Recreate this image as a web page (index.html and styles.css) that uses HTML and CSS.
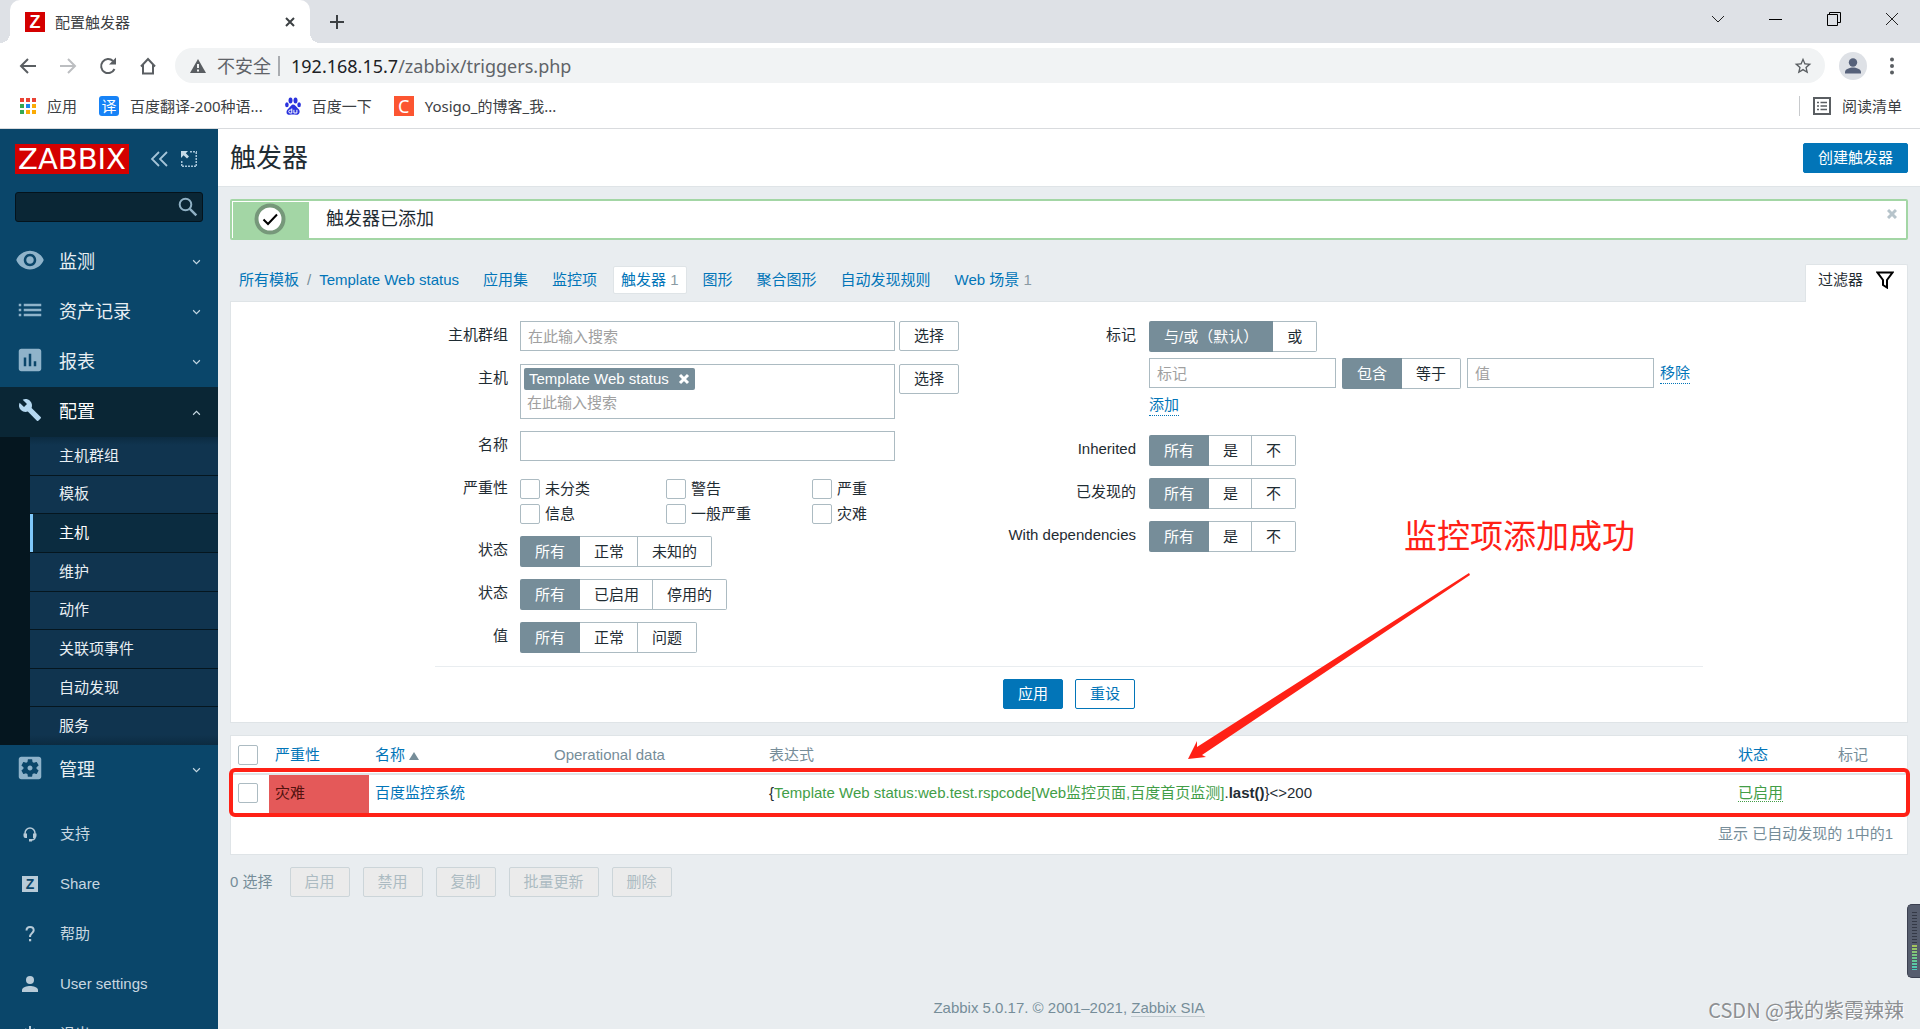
FILE: index.html
```
<!DOCTYPE html>
<html lang="zh-CN">
<head>
<meta charset="utf-8">
<title>配置触发器</title>
<link rel="stylesheet" href="styles.css">
</head>
<body>
<div class="browser">
  <div class="tabstrip">
    <div class="tab">
      <span class="favicon">Z</span>
      <span class="tab-title">配置触发器</span>
      <button class="icon-btn" aria-label="关闭标签页"><svg width="12" height="12" viewBox="0 0 12 12"><path d="M2 2l8 8M10 2l-8 8" stroke="#3c4043" stroke-width="2" fill="none"/></svg></button>
    </div>
    <button class="icon-btn new-tab" aria-label="新标签页"><svg width="16" height="16" viewBox="0 0 16 16"><path d="M8 1v14M1 8h14" stroke="#3c4043" stroke-width="2" fill="none"/></svg></button>
    <div class="window-controls">
      <button class="icon-btn" aria-label="搜索标签页"><svg width="14" height="14" viewBox="0 0 14 14"><path d="M1 4l6 6 6-6" stroke="#222" fill="none"/></svg></button>
      <button class="icon-btn" aria-label="最小化"><svg width="14" height="14" viewBox="0 0 14 14"><path d="M0 7.500h13" stroke="#000" fill="none"/></svg></button>
      <button class="icon-btn" aria-label="还原"><svg width="14" height="14" viewBox="0 0 14 14"><path d="M.5 2.500h10v11H.5zM2.500 2.500v-2h11v10h-3" stroke="#000" fill="none"/></svg></button>
      <button class="icon-btn" aria-label="关闭"><svg width="14" height="14" viewBox="0 0 14 14"><path d="M1 1l12 12M13 1L1 13" stroke="#222" fill="none"/></svg></button>
    </div>
  </div>
  <div class="toolbar">
    <button class="icon-btn" aria-label="后退"><svg width="20" height="20" viewBox="0 0 20 20"><path d="M18 10H3M10 3l-7 7 7 7" stroke="#5a5e62" stroke-width="2" fill="none"/></svg></button>
    <button class="icon-btn" aria-label="前进"><svg width="20" height="20" viewBox="0 0 20 20"><path d="M2 10h15M10 3l7 7-7 7" stroke="#bcbec1" stroke-width="2" fill="none"/></svg></button>
    <button class="icon-btn" aria-label="重新加载"><svg width="20" height="20" viewBox="0 0 20 20"><path d="M16.500 13a7 7 0 1 1-1.500-8" stroke="#5a5e62" stroke-width="2" fill="none"/><path d="M18 1.500v7h-7z" fill="#5a5e62"/></svg></button>
    <button class="icon-btn" aria-label="主页"><svg width="20" height="20" viewBox="0 0 20 20"><path d="M5 9v8.500h10V9M3 10.500l7-7.500 7 7.500" stroke="#5a5e62" stroke-width="2" fill="none"/></svg></button>
    <div class="omnibox">
      <svg width="16" height="14" viewBox="0 0 16 14"><path d="M8 0l8 14H0z" fill="#5a5e62"/><path d="M8 5v4M8 10.500v2" stroke="#f1f3f4" stroke-width="2"/></svg>
      <span class="insecure">不安全</span>
      <span class="url"><span class="host">192.168.15.7</span>/zabbix/triggers.php</span>
      <button class="icon-btn bookmark-star" aria-label="为此标签页添加书签"><svg width="20" height="20" viewBox="0 0 24 24"><path fill="#5a5e62" d="M22 9.240l-7.190-.62L12 2 9.190 8.630 2 9.240l5.460 4.730L5.820 21 12 17.270 18.180 21l-1.630-7.030L22 9.240zM12 15.400l-3.760 2.270 1-4.280-3.320-2.880 4.380-.38L12 6.100l1.710 4.040 4.380.38-3.320 2.880 1 4.280L12 15.400z"/></svg></button>
    </div>
    <button class="avatar" aria-label="用户"><svg width="28" height="28" viewBox="0 0 28 28"><circle cx="14" cy="10.500" r="4.200" fill="#56617a"/><path d="M6 21.500v-1.500c0-3 5-4.500 8-4.500s8 1.500 8 4.500v1.500z" fill="#56617a"/></svg></button>
    <button class="icon-btn" aria-label="菜单"><svg width="20" height="20" viewBox="0 0 20 20" fill="#5a5e62"><circle cx="10" cy="3.500" r="2"/><circle cx="10" cy="10" r="2"/><circle cx="10" cy="16.500" r="2"/></svg></button>
  </div>
  <nav class="bookmarks">
    <a href="#" class="bookmark"><svg width="16" height="16" viewBox="0 0 16 16"><path fill="#ea4335" d="M0 0h4v4H0zM6 0h4v4H6zM12 0h4v4h-4z"/><path fill="#34a853" d="M0 6h4v4H0zM0 12h4v4H0z"/><path fill="#1a86f0" d="M6 6h4v4H6z"/><path fill="#fbab05" d="M12 6h4v4h-4zM6 12h4v4H6zM12 12h4v4h-4z"/></svg>应用</a>
    <a href="#" class="bookmark"><span class="site-icon translate">译</span>百度翻译-200种语...</a>
    <a href="#" class="bookmark"><svg width="16" height="20" viewBox="2 0 16 20" fill="#2a32dd"><ellipse cx="7.500" cy="4.500" rx="2" ry="3"/><ellipse cx="12.500" cy="4.500" rx="2" ry="3"/><ellipse cx="3.900" cy="8.800" rx="1.800" ry="2.500"/><ellipse cx="16.100" cy="8.800" rx="1.800" ry="2.500"/><path d="M10 8.500c2 0 3 2 4.500 3.500s2.500 2.500 2 4.500-2 2.500-3.500 2.300-4.500-.3-6 0-3.500-.5-3.500-2.500 1-2.800 2.500-4.300S8.500 8.500 10 8.500z"/><path d="M8.800 12.500v4.500H7.200a1.300 1.300 0 0 1 0-3h1.600M10.900 13.800V17h3v-3.200" stroke="#fff" fill="none"/></svg>百度一下</a>
    <a href="#" class="bookmark"><span class="site-icon csdn">C</span>Yosigo_的博客_我...</a>
    <a href="#" class="bookmark reading"><svg width="18" height="18" viewBox="0 0 18 18"><path d="M1 1h16v16H1z" fill="none" stroke="#5a5e62" stroke-width="2"/><path d="M4 5.500h2M4 9h2M4 12.500h2M7.500 5.500H14M7.500 9H14M7.500 12.500H14" stroke="#5a5e62" stroke-width="1.500"/></svg>阅读清单</a>
  </nav>
</div>

<div class="app">
  <aside class="sidebar">
    <div class="brand">
      <a href="#" class="logo">ZABBIX</a>
      <button class="icon-btn collapse" aria-label="折叠侧边栏"><svg width="18" height="16" viewBox="0 0 18 16"><path d="M9 1L2 8l7 7M17 1l-7 7 7 7" stroke="#a5c4d8" stroke-width="1.800" fill="none"/></svg></button>
      <button class="icon-btn" aria-label="隐藏侧边栏"><svg width="16" height="16" viewBox="0 0 16 16"><path d="M9 .75h7M15.250 1v14M15 15.250H1M.75 15V9" stroke="#a5c4d8" stroke-width="1.500" stroke-dasharray="2 1" fill="none"/><path d="M0 0h7L4.800 2.300 8 5.500 6 7.500 2.600 4.300 0 7z" fill="#c5dbe8"/></svg></button>
    </div>
    <form class="search">
      <input type="text" aria-label="搜索">
      <button class="icon-btn" type="button" aria-label="搜索"><svg width="20" height="20" viewBox="0 0 20 20"><circle cx="7.500" cy="7.500" r="5.800" fill="none" stroke="#8fb0c4" stroke-width="2"/><path d="M11.800 11.800l6.500 6.500" stroke="#8fb0c4" stroke-width="2.500"/></svg></button>
    </form>
    <nav class="menu">
      <a href="#" class="menu-item"><svg class="menu-icon" viewBox="0 0 24 24"><path d="M12 4.500C7 4.500 2.730 7.610 1 12c1.730 4.390 6 7.500 11 7.500s9.270-3.110 11-7.500c-1.730-4.390-6-7.500-11-7.500zM12 17c-2.760 0-5-2.240-5-5s2.240-5 5-5 5 2.240 5 5-2.240 5-5 5zm0-8c-1.660 0-3 1.340-3 3s1.340 3 3 3 3-1.340 3-3-1.340-3-3-3z"/></svg><span>监测</span><svg class="chevron" viewBox="0 0 8 8"><path d="M1 2l3 3 3-3"/></svg></a>
      <a href="#" class="menu-item"><svg class="menu-icon" viewBox="0 0 24 24"><path d="M3 7h2v2H3zM3 11h2v2H3zM3 15h2v2H3zM7 7h14v2H7zM7 11h14v2H7zM7 15h14v2H7z"/></svg><span>资产记录</span><svg class="chevron" viewBox="0 0 8 8"><path d="M1 2l3 3 3-3"/></svg></a>
      <a href="#" class="menu-item"><svg class="menu-icon" viewBox="0 0 24 24"><path d="M19 3H5c-1.100 0-2 .9-2 2v14c0 1.100.9 2 2 2h14c1.100 0 2-.9 2-2V5c0-1.100-.9-2-2-2zM9 17H7v-7h2v7zm4 0h-2V7h2v10zm4 0h-2v-4h2v4z"/></svg><span>报表</span><svg class="chevron" viewBox="0 0 8 8"><path d="M1 2l3 3 3-3"/></svg></a>
      <a href="#" class="menu-item open"><svg class="menu-icon" viewBox="-3 -3 30 30"><path d="M22.700 19l-9.100-9.100c.9-2.300.4-5-1.500-6.900-2-2-5-2.400-7.400-1.300L9 6 6 9 1.600 4.700C.4 7.100.9 10.100 2.900 12.100c1.900 1.900 4.600 2.400 6.900 1.500l9.100 9.100c.4.4 1 .4 1.400 0l2.300-2.300c.5-.4.5-1.100.1-1.400z"/></svg><span>配置</span><svg class="chevron" viewBox="0 0 8 8"><path d="M1 6l3-3 3 3"/></svg></a>
      <div class="submenu">
        <a href="#">主机群组</a>
        <a href="#">模板</a>
        <a href="#" class="current">主机</a>
        <a href="#">维护</a>
        <a href="#">动作</a>
        <a href="#">关联项事件</a>
        <a href="#">自动发现</a>
        <a href="#">服务</a>
      </div>
      <a href="#" class="menu-item"><svg class="menu-icon" viewBox="0 0 24 24"><path d="M12 10c-1.100 0-2 .9-2 2s.9 2 2 2 2-.9 2-2-.9-2-2-2zm7-7H5c-1.110 0-2 .9-2 2v14c0 1.100.89 2 2 2h14c1.110 0 2-.9 2-2V5c0-1.100-.89-2-2-2zm-1.750 9c0 .23-.02.46-.05.68l1.480 1.160c.13.11.17.3.08.45l-1.400 2.420c-.09.15-.27.21-.43.15l-1.740-.7c-.36.28-.76.51-1.180.69l-.26 1.850c-.03.17-.18.3-.35.3h-2.800c-.17 0-.32-.13-.35-.29l-.26-1.850c-.43-.18-.82-.41-1.180-.69l-1.740.7c-.16.06-.34 0-.43-.15l-1.400-2.420c-.09-.15-.05-.34.08-.45l1.480-1.160c-.03-.23-.05-.46-.05-.69 0-.23.02-.46.05-.68l-1.480-1.160c-.13-.11-.17-.3-.08-.45l1.400-2.420c.09-.15.27-.21.43-.15l1.740.7c.36-.28.76-.51 1.180-.69l.26-1.850c.03-.17.18-.3.35-.3h2.800c.17 0 .32.13.35.29l.26 1.850c.43.18.82.41 1.180.69l1.740-.7c.16-.06.34 0 .43.15l1.400 2.420c.09.15.05.34-.08.45l-1.480 1.160c.03.23.05.46.05.69z"/></svg><span>管理</span><svg class="chevron" viewBox="0 0 8 8"><path d="M1 2l3 3 3-3"/></svg></a>
    </nav>
    <nav class="user-menu">
      <a href="#"><svg viewBox="0 0 16 16"><path d="M3 9V7.500a5 5.500 0 0 1 10 0V11c0 2-1 3-4 3" fill="none" stroke="#b8cbd8" stroke-width="1.500"/><path d="M1.500 7.500H5V12H3.500a2 2 0 0 1-2-2zM11 7.500h3.500V10a2 2 0 0 1-2 2H11zM7 13h3v2.500H7z"/></svg>支持</a>
      <a href="#"><span class="z-mark">Z</span>Share</a>
      <a href="#"><svg viewBox="0 0 16 16"><path d="M4.500 4.500C4.500 2 6 1 8 1s3.700 1.300 3.700 3.300C11.700 7 8 7 8 11" fill="none" stroke="#b8cbd8" stroke-width="2"/><path d="M7 13h2.200v2.300H7z"/></svg>帮助</a>
      <a href="#"><svg viewBox="0 0 16 16"><circle cx="8" cy="4" r="4"/><path d="M0 16v-2c0-2.700 5-4 8-4s8 1.300 8 4v2z"/></svg>User settings</a>
      <a href="#"><svg viewBox="0 0 16 16"><path d="M7 0h2v8H7z"/><path d="M4.500 3a6 6 0 1 0 7 0" fill="none" stroke="#b8cbd8" stroke-width="2"/></svg>退出</a>
    </nav>
  </aside>

  <main class="content">
    <header class="page-header">
      <h1>触发器</h1>
      <button class="btn primary">创建触发器</button>
    </header>

    <section class="message">
      <div class="message-icon"><svg width="32" height="32" viewBox="0 0 32 32"><circle cx="16" cy="16" r="13.500" fill="#fff" stroke="#76987a" stroke-width="4"/><path d="M9.500 16.500l4.500 4.500 9-9.500" stroke="#000" stroke-width="2" fill="none"/></svg></div>
      <p>触发器已添加</p>
      <button class="icon-btn" aria-label="关闭消息"><svg width="10" height="10" viewBox="0 0 10 10"><path d="M1 1l8 8M9 1l-8 8" stroke="#b7c4cb" stroke-width="3" fill="none"/></svg></button>
    </section>

    <div class="tabs">
      <nav class="crumbs">
        <span class="path"><a href="#">所有模板</a><span>/</span><a href="#">Template Web status</a></span>
        <a href="#">应用集</a>
        <a href="#">监控项</a>
        <span class="selected"><a href="#">触发器</a> <sup>1</sup></span>
        <a href="#">图形</a>
        <a href="#">聚合图形</a>
        <a href="#">自动发现规则</a>
        <span><a href="#">Web 场景</a> <sup>1</sup></span>
      </nav>
      <button class="filter-tab">过滤器<svg width="18" height="18" viewBox="0 0 18 18"><path d="M1.500 1.500h15L11 9v7.500L7 14V9z" stroke="#000" stroke-width="2" fill="none"/></svg></button>
    </div>

    <form class="panel filter">
      <div class="filter-body">
        <div class="fields">
          <label class="name" for="groups">主机群组</label>
          <div class="field pick"><input class="text" id="groups" type="text" placeholder="在此输入搜索"><button type="button" class="btn plain">选择</button></div>

          <label class="name" for="hosts">主机</label>
          <div class="field pick">
            <div class="multiselect">
              <span class="chip">Template Web status<button type="button" class="icon-btn" aria-label="移除"><svg width="12" height="12" viewBox="0 0 12 12"><path d="M2 2l8 8M10 2l-8 8" stroke="#fff" stroke-width="3" fill="none"/></svg></button></span>
              <input id="hosts" type="text" placeholder="在此输入搜索">
            </div>
            <button type="button" class="btn plain">选择</button>
          </div>

          <label class="name" for="name">名称</label>
          <div class="field pick"><input class="text" id="name" type="text"></div>

          <span class="name">严重性</span>
          <div class="checks">
            <label><input type="checkbox">未分类</label><label><input type="checkbox">警告</label><label><input type="checkbox">严重</label>
            <label><input type="checkbox">信息</label><label><input type="checkbox">一般严重</label><label><input type="checkbox">灾难</label>
          </div>

          <span class="name">状态</span>
          <div class="seg"><label><input type="radio" name="state" checked>所有</label><label><input type="radio" name="state">正常</label><label><input type="radio" name="state">未知的</label></div>

          <span class="name">状态</span>
          <div class="seg"><label><input type="radio" name="status" checked>所有</label><label><input type="radio" name="status">已启用</label><label><input type="radio" name="status">停用的</label></div>

          <span class="name">值</span>
          <div class="seg"><label><input type="radio" name="value" checked>所有</label><label><input type="radio" name="value">正常</label><label><input type="radio" name="value">问题</label></div>
        </div>

        <div class="fields right">
          <span class="name">标记</span>
          <div class="tags">
            <div class="seg"><label><input type="radio" name="evaltype" checked>与/或（默认）</label><label><input type="radio" name="evaltype">或</label></div>
            <div class="tag-row">
              <input class="text" type="text" placeholder="标记" aria-label="标记">
              <div class="seg"><label><input type="radio" name="op" checked>包含</label><label><input type="radio" name="op">等于</label></div>
              <input class="text" type="text" placeholder="值" aria-label="值">
              <button type="button" class="link">移除</button>
            </div>
            <div class="add-row"><button type="button" class="link">添加</button></div>
          </div>

          <span class="name">Inherited</span>
          <div class="seg"><label><input type="radio" name="inherited" checked>所有</label><label><input type="radio" name="inherited">是</label><label><input type="radio" name="inherited">不</label></div>

          <span class="name">已发现的</span>
          <div class="seg"><label><input type="radio" name="discovered" checked>所有</label><label><input type="radio" name="discovered">是</label><label><input type="radio" name="discovered">不</label></div>

          <span class="name">With dependencies</span>
          <div class="seg"><label><input type="radio" name="deps" checked>所有</label><label><input type="radio" name="deps">是</label><label><input type="radio" name="deps">不</label></div>
        </div>
      </div>
      <div class="filter-actions">
        <button type="button" class="btn primary">应用</button>
        <button type="button" class="btn outline">重设</button>
      </div>
    </form>

    <section class="panel list">
      <table>
        <colgroup><col class="c-check"><col class="c-sev"><col class="c-name"><col class="c-data"><col><col class="c-status"><col class="c-tags"></colgroup>
        <thead>
          <tr><th><input type="checkbox" aria-label="全选"></th><th><a href="#">严重性</a></th><th><a href="#">名称</a><span class="sort"></span></th><th>Operational data</th><th>表达式</th><th><a href="#">状态</a></th><th>标记</th></tr>
        </thead>
        <tbody>
          <tr><td><input type="checkbox" aria-label="百度监控系统"></td><td class="disaster">灾难</td><td><a href="#">百度监控系统</a></td><td></td><td>{<a href="#" class="green">Template Web status:web.test.rspcode[Web监控页面,百度首页监测]</a>.<b>last()</b>}&lt;&gt;200</td><td><a href="#" class="green dotted">已启用</a></td><td></td></tr>
        </tbody>
      </table>
      <p class="stats">显示 已自动发现的 1中的1</p>
    </section>

    <div class="bulk">
      <span>0 选择</span>
      <button class="btn" disabled>启用</button>
      <button class="btn" disabled>禁用</button>
      <button class="btn" disabled>复制</button>
      <button class="btn" disabled>批量更新</button>
      <button class="btn" disabled>删除</button>
    </div>

    <footer>Zabbix 5.0.17. © 2001–2021, <a href="#">Zabbix SIA</a></footer>
  </main>
</div>

<div class="row-highlight"></div>
<div class="note">监控项添加成功</div>
<svg class="arrow" width="284" height="188" viewBox="1187 572 284 188"><path fill="#ff2116" d="M1188 759l9-18v6l272-174 1 2-268 180 4 2z"/></svg>
<div class="meter"><span class="idle"></span><span class="active"></span></div>
<div class="watermark">CSDN @我的紫霞辣辣</div>
</body>
</html>
```
FILE: styles.css
```
* { box-sizing: border-box; }
body {
  margin: 0;
  height: 100vh;
  overflow: hidden;
  position: relative;
  display: flex;
  flex-direction: column;
  font: 15px/20px "Liberation Sans", "Noto Sans CJK SC", sans-serif;
  color: #1f2c33;
  background: #e9edf0;
}
h1, p { margin: 0; font-weight: normal; }
a { color: #0275b8; text-decoration: none; }
button, input { font: inherit; color: inherit; }
svg { display: block; flex: none; }
.icon-btn { border: 0; padding: 0; background: none; display: block; flex: none; }

/* Browser window */
.browser { font-family: "Noto Sans", "Noto Sans CJK SC", sans-serif; background: #fff; color: #3c4043; border-bottom: 1px solid #d9dbde; flex: none; }
.tabstrip { height: 43px; background: #dee1e6; display: flex; align-items: center; padding-left: 10px; }
.tab { width: 300px; height: 43px; background: #fff; border-radius: 10px 10px 0 0; display: flex; align-items: center; gap: 10px; padding: 0 14px 0 15px; position: relative; }
.tab::before, .tab::after { content: ""; position: absolute; bottom: 0; width: 10px; height: 10px; }
.tab::before { left: -10px; background: radial-gradient(circle at 0 0, #dee1e6 10px, #fff 10px); }
.tab::after { right: -10px; background: radial-gradient(circle at 100% 0, #dee1e6 10px, #fff 10px); }
.tab-title { flex: 1; }
.favicon { width: 20px; height: 20px; background: #d40000; color: #fff; font: bold 18px/20px "Liberation Sans", sans-serif; text-align: center; }
.new-tab { margin-left: 19px; }
.window-controls { margin-left: auto; display: flex; gap: 44px; padding: 0 21px 6px 0; }
.toolbar { height: 45px; display: flex; align-items: center; gap: 20px; padding: 0 18px; }
.omnibox { flex: 1; height: 35px; border-radius: 18px; background: #f1f3f4; display: flex; align-items: center; padding: 0 12px 0 15px; margin: 0 -6px 0 -3px; font-size: 18px; }
.insecure { margin-left: 11px; padding-right: 7px; border-right: 2px solid #a9acb0; color: #5f6368; line-height: 20px; }
.url { margin-left: 11px; color: #5f6368; }
.host { color: #202124; }
.bookmark-star { margin-left: auto; }
.avatar { width: 28px; height: 28px; padding: 0; border: 0; border-radius: 14px; background: #dee1e6; margin-right: -5px; }
.bookmarks { height: 40px; display: flex; align-items: center; gap: 22px; padding: 0 18px 4px 20px; }
.bookmark { display: flex; align-items: center; gap: 11px; color: #3c4043; }
.site-icon { width: 20px; height: 20px; color: #fff; text-align: center; line-height: 20px; }
.translate { background: #1783f7; border-radius: 3px; }
.csdn { background: #fc5531; font-size: 18px; }
.reading { margin-left: auto; border-left: 1px solid #c8cacd; padding-left: 13px; }

/* Shell */
.app { flex: 1; min-height: 0; display: flex; }
.sidebar { width: 218px; flex: none; background: #0a466a; overflow: hidden; }
.brand { display: flex; align-items: center; padding: 15px 20px 18px 15px; }
.logo { width: 114px; height: 30px; background: #d40000; color: #fff; font: 29px/30px "DejaVu Sans", sans-serif; text-align: center; }
.collapse { margin: 0 13px 0 21px; }
.search { margin: 0 15px 15px; height: 30px; background: #0a2635; border: 1px solid #04131c; border-radius: 3px; display: flex; align-items: center; padding-right: 4px; }
.search input { flex: 1; min-width: 0; border: 0; background: none; color: #fff; }
.menu-item { height: 50px; display: flex; align-items: center; gap: 14px; padding: 0 17px 0 15px; font-size: 18px; color: #e8eff3; }
.menu-item span { flex: 1; }
.menu-icon { width: 30px; height: 30px; fill: #8fb3ca; margin-bottom: 4px; }
.chevron { width: 9px; height: 9px; fill: none; stroke: #c6d8e3; }
.open { background: #0a2635; color: #fff; }
.open .menu-icon { fill: #b5d8f0; }
.submenu { height: 308px; border-left: 30px solid #05161f; background: #05161f; display: grid; grid-auto-rows: 1fr; gap: 1px; }
.submenu a { background: #10344f; color: #e8eff3; padding-left: 29px; display: flex; align-items: center; }
.submenu .current { background: #0b2c40; color: #fff; border-left: 3px solid #7fc8fa; padding-left: 26px; }
.submenu a:first-child { background: linear-gradient(#0c2b41, #10344f 8px); }
.submenu a:last-child { background: linear-gradient(#10344f 28px, #0c2b41); }
.user-menu { margin-top: 14px; }
.user-menu a { height: 50px; display: flex; align-items: center; gap: 22px; padding-left: 22px; color: #c8d7e0; }
.user-menu svg { width: 16px; height: 16px; fill: #b8cbd8; }
.z-mark { width: 16px; height: 16px; background: #b8cbd8; color: #0a466a; font: bold 14px/16px "Liberation Sans", sans-serif; text-align: center; }

/* Content */
.content { flex: 1; min-width: 0; display: flex; flex-direction: column; }
.page-header { height: 58px; background: #fff; border-bottom: 1px solid #dfe4e7; display: flex; align-items: center; justify-content: space-between; padding: 0 12px; }
.page-header h1 { font-size: 26px; line-height: 32px; }
.btn { height: 30px; padding: 0 14px; border: 1px solid #acbbc2; border-radius: 2px; background: #fff; line-height: 20px; white-space: nowrap; }
.primary { background: #0275b8; border-color: #0275b8; color: #fff; }
.outline { border-color: #0275b8; color: #0275b8; }
.btn:disabled { background: #ebebeb; border-color: #ccd5d9; color: #acbbc2; }
.message { margin: 12px 12px 0; height: 41px; background: #fff; border: 2px solid #a3d6a5; border-radius: 2px; padding: 1px 0 0 1px; display: flex; font-size: 18px; }
.message-icon { width: 76px; background: #a3d6a5; display: flex; align-items: center; justify-content: center; padding: 0 3px 2px 0; }
.message p { flex: 1; padding: 6px 17px; line-height: 22px; }
.message .icon-btn { align-self: flex-start; margin: 7px 9px 0 0; }
.tabs { display: flex; justify-content: space-between; align-items: flex-end; padding: 0 12px 0 21px; margin-top: 24px; height: 37px; }
.crumbs { display: flex; align-items: center; gap: 24px; height: 37px; padding-bottom: 6px; }
.path { display: flex; gap: 8px; color: #768d99; }
.selected { background: #fff; border: 1px solid #dfe4e7; border-radius: 2px; padding: 3px 7px; height: 28px; margin: 0 -8px; }
sup { font-size: 15px; line-height: 20px; vertical-align: baseline; color: #8a9aa3; }
.filter-tab { height: 38px; margin-bottom: -1px; background: #fff; border: 1px solid #dfe4e7; border-bottom: 0; border-radius: 2px 2px 0 0; padding: 0 13px 8px 12px; display: flex; align-items: center; gap: 13px; position: relative; }
.panel { margin: 0 12px; background: #fff; border: 1px solid #dfe4e7; }
.filter { padding: 19px 12px 13px; }
.filter-body { max-width: 1268px; margin: 0 auto; display: grid; grid-template-columns: 524px 1fr; gap: 50px; padding-bottom: 13px; border-bottom: 1px solid #e9edf0; }
.fields { display: grid; grid-template-columns: 73px 1fr; column-gap: 12px; row-gap: 12px; align-content: start; }
.right { grid-template-columns: 127px 1fr; column-gap: 13px; }
.name { display: flex; justify-content: flex-end; padding-top: 4px; line-height: 20px; white-space: nowrap; }
.text { height: 30px; border: 1px solid #acbbc2; padding: 0 7px; background: #fff; outline: 0; }
::placeholder { color: #a0a0a0; opacity: 1; }
.pick { display: flex; gap: 4px; align-items: flex-start; min-height: 31px; }
.pick .text, .multiselect { width: 375px; }
.multiselect { height: 55px; border: 1px solid #acbbc2; padding: 3px; }
.multiselect input { width: 100%; height: 25px; border: 0; padding: 0 3px; display: block; outline: 0; }
.chip { display: inline-flex; align-items: center; gap: 9px; height: 22px; background: #768d99; color: #fff; border-radius: 2px; padding: 0 5px; vertical-align: top; }
.checks { display: grid; grid-template-columns: repeat(3, 146px); grid-auto-rows: 25px; }
.checks label { display: flex; align-items: flex-end; gap: 5px; }
input[type="checkbox"] { appearance: none; width: 20px; height: 20px; margin: 0; border: 1px solid #acbbc2; border-radius: 2px; background: #fff; display: block; flex: none; }
.seg { display: flex; height: 31px; }
.seg label { display: flex; align-items: center; padding: 0 13px 0 14px; border: 1px solid #acbbc2; border-left: 0; background: #fff; white-space: nowrap; }
.seg label:first-child { border-radius: 2px 0 0 2px; }
.seg label:last-child { border-radius: 0 2px 2px 0; padding-right: 14px; }
.seg label:has(:checked) { padding: 0 15px; background: #768d99; border: 0; color: #fff; }
.seg input { appearance: none; width: 0; height: 0; margin: 0; }
.tag-row { display: flex; align-items: flex-start; gap: 6px; margin-top: 6px; }
.tag-row .text { width: 187px; }
.link { border: 0; border-bottom: 1px dotted #0275b8; background: none; padding: 0; color: #0275b8; line-height: 20px; }
.tag-row .link { margin-top: 5px; }
.add-row { height: 34px; padding-top: 6px; }
.filter-actions { display: flex; justify-content: center; gap: 12px; padding-top: 12px; }
.list { margin-top: 12px; }
table { width: 100%; table-layout: fixed; border-collapse: separate; border-spacing: 0; }
.c-check { width: 38px; }
.c-sev, .c-status { width: 100px; }
.c-name { width: 179px; }
.c-data { width: 215px; }
.c-tags { width: 75px; }
th, td { text-align: left; font-weight: normal; padding: 0 6px; height: 38px; white-space: nowrap; }
th { color: #768d99; border-bottom: 2px solid #dfe4e7; height: 39px; }
th:first-child, td:first-child { padding-left: 7px; }
td { padding-bottom: 2px; }
.sort { display: inline-block; margin-left: 4px; border: 5px solid transparent; border-top: 0; border-bottom: 8px solid #768d99; }
.disaster { background: #e45959; color: #52120f; }
.green { color: #429e47; }
.dotted { border-bottom: 1px dotted #429e47; }
.stats { text-align: right; color: #768d99; padding: 11px 14px 10px; }
.bulk { display: flex; align-items: center; gap: 13px; margin: 12px 12px 0; color: #768d99; }
.bulk span { margin-right: 4px; }
footer { margin-top: auto; padding-bottom: 11px; text-align: center; color: #768d99; }
footer a { color: #768d99; border-bottom: 1px solid #c3ccd1; }

/* Annotations and desktop overlays */
.row-highlight { position: absolute; left: 229px; right: 10px; top: 768px; height: 49px; border: 4px solid #ff2116; border-radius: 6px; }
.note { position: absolute; left: 1404px; top: 517px; font-size: 33px; line-height: 40px; color: #ff2116; white-space: nowrap; }
.arrow { position: absolute; left: 1187px; top: 572px; }
.meter { position: absolute; right: 0; top: 904px; width: 13px; height: 74px; border: 1px solid #3b4050; border-right: 0; border-radius: 5px 0 0 5px; background: #565d6e; padding: 7px 3px 7px 4px; }
.meter span { display: block; }
.idle { height: 33px; background: repeating-linear-gradient(#343947 0 1px, #565d6e 1px 3px); }
.active { height: 25px; background: repeating-linear-gradient(transparent 0 2px, #4c5462 2px 3px), linear-gradient(#a9c45a, #6cc98a, #4bc9bd); }
.watermark { position: absolute; right: 16px; top: 996px; font: 20px/28px "Noto Sans CJK SC", sans-serif; color: #8d9093; text-shadow: 1px 1px 0 #fff; white-space: nowrap; }
```
